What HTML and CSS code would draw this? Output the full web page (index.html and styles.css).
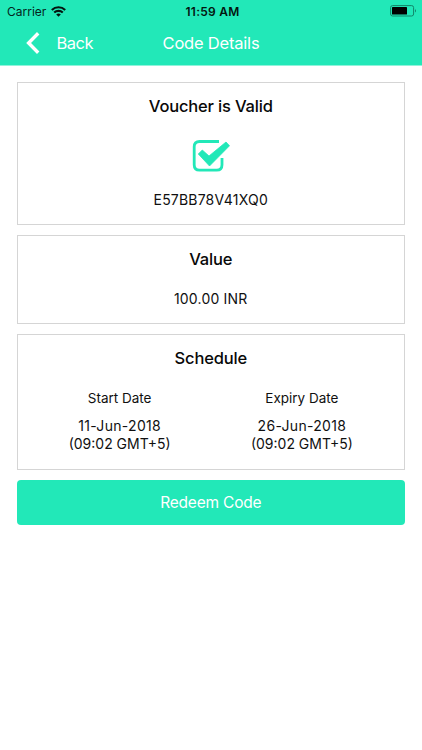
FILE: index.html
```html
<!DOCTYPE html>
<html lang="en">
<head>
<meta charset="utf-8">
<meta name="viewport" content="width=device-width, initial-scale=1">
<title>Code Details</title>
<link rel="stylesheet" href="styles.css">
</head>
<body>
<header class="header">
  <div class="status">
    <div class="carrier"><span class="carrier-name">Carrier</span>
      <svg class="wifi" width="15" height="11" viewBox="0 0 15 11" fill="none" stroke="#04150f" stroke-width="2.1"><path d="M.8 4C4.6.3 10.4.3 14.2 4M3.2 6.6c2.4-2.3 6.2-2.3 8.6 0"/><path d="M7.5 10.7 5.2 8.4c1.3-1.2 3.3-1.2 4.6 0z" fill="#04150f" stroke="none"/></svg>
    </div>
    <span class="time">11:59 AM</span>
    <svg class="battery" width="28" height="12" viewBox="0 0 28 12"><rect x=".6" y=".6" width="23" height="10.4" rx="2" fill="none" stroke="#128468"/><rect x="2" y="2" width="15" height="7.5" rx=".6"/><path d="M25 4q2 1.8 0 3.6z" fill="#128468"/></svg>
  </div>
  <nav class="nav">
    <a class="back"><svg class="chevron" width="14" height="22" viewBox="0 0 14 22" fill="none" stroke="#fff" stroke-width="3.4"><path d="M12.2 1.3 2.6 11l9.6 9.7"/></svg><span class="back-label">Back</span></a>
    <span class="title">Code Details</span>
    <span></span>
  </nav>
</header>
<main class="content">
  <section class="card voucher">
    <h2 class="heading">Voucher is Valid</h2>
    <svg class="check" width="38" height="34" viewBox="0 0 38 34"><path d="M27 2.5H7.5Q2.200 2.500 2.200 7.800v18Q2.200 31.200 7.500 31.200h17.200q5.300 0 5.300-5.400V19" fill="none" stroke="#22e8b8" stroke-width="2.8"/><path d="M6.300 15 10.300 11 17 17 34 3 37.500 6.800 17.500 27z" fill="#22e8b8" stroke="#22e8b8" stroke-width=".8" stroke-linejoin="round"/></svg>
    <p class="text code">E57BB78V41XQ0</p>
  </section>
  <section class="card value">
    <h2 class="heading">Value</h2>
    <p class="text amount">100.00 INR</p>
  </section>
  <section class="card schedule">
    <h2 class="heading">Schedule</h2>
    <div class="dates">
      <div class="date"><p class="text label">Start Date</p><p class="text day">11-Jun-2018</p><p class="text">(09:02 GMT+5)</p></div>
      <div class="date"><p class="text label">Expiry Date</p><p class="text day">26-Jun-2018</p><p class="text">(09:02 GMT+5)</p></div>
    </div>
  </section>
  <button class="redeem">Redeem Code</button>
</main>
</body>
</html>
```
FILE: styles.css
```css
* { box-sizing: border-box; }
body { margin: 0; background: #fff; color: #101010; font-family: Inter, "Liberation Sans", sans-serif; }
h2, p { margin: 0; }
svg { display: block; }
.header { height: 66px; background: #22e8b8; border-bottom: 1px solid #90f3db; }
.status { display: grid; grid-template-columns: 1fr auto 1fr; align-items: center; height: 22px; padding: 0 4px 0 7px; }
.carrier { display: flex; align-items: center; gap: 5px; font-size: 12px; color: #04251c; }
.time { font-size: 12px; font-weight: 600; letter-spacing: .25px; color: #04150f; }
.battery { justify-self: end; }
.nav { display: grid; grid-template-columns: 1fr auto 1fr; align-items: center; height: 42px; padding: 0 26px; color: #fff; font-size: 16.5px; letter-spacing: -.2px; }
.back { display: flex; align-items: center; gap: 16.5px; letter-spacing: -.5px; }
.content { padding: 16px 17px 0 16.5px; display: flex; flex-direction: column; gap: 10px; }
.card { border: 1px solid #d5d5d5; text-align: center; padding-top: 12px; }
.voucher { height: 143px; }
.value { height: 89px; }
.schedule { height: 136px; }
.heading { font-size: 16.5px; line-height: 22px; font-weight: 500; letter-spacing: -.18px; color: #080808; }
.text { font-size: 14px; line-height: 18px; }
.check { margin: 22px auto 0; }
.code { margin-top: 18px; letter-spacing: .2px; }
.amount { margin-top: 20px; letter-spacing: .2px; }
.dates { display: grid; grid-template-columns: 1fr 1fr; margin-top: 20px; padding: 0 11px; }
.day { letter-spacing: .3px; }
.label { margin-bottom: 10px; font-size: 13.5px; }
.redeem { height: 45px; border: 0; padding: 0; border-radius: 4px; background: #22e8b8; color: #fff; font: 15.5px Inter, "Liberation Sans", sans-serif; letter-spacing: -.2px; }
```
